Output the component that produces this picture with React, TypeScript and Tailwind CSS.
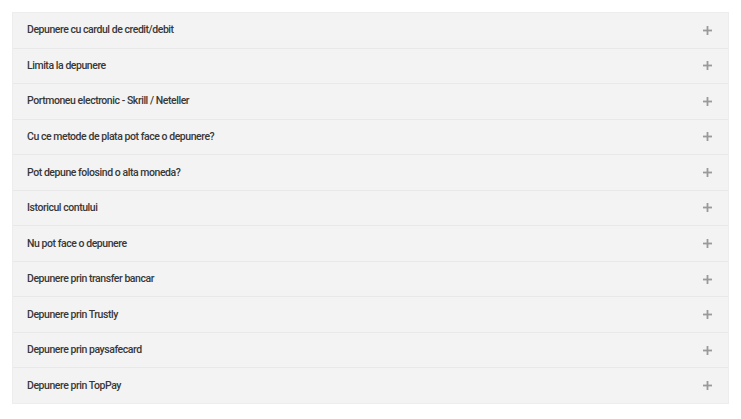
import React from 'react';

const items = [
  'Depunere cu cardul de credit/debit',
  'Limita la depunere',
  'Portmoneu electronic - Skrill / Neteller',
  'Cu ce metode de plata pot face o depunere?',
  'Pot depune folosind o alta moneda?',
  'Istoricul contului',
  'Nu pot face o depunere',
  'Depunere prin transfer bancar',
  'Depunere prin Trustly',
  'Depunere prin paysafecard',
  'Depunere prin TopPay',
];

export default function App() {
  return (
    <div className="w-[741px] h-[419px] bg-white pt-[12px] px-[12px]" style={{ fontFamily: 'Roboto, "Liberation Sans", sans-serif' }}>
      <div className="w-[717px] flex flex-col border border-[#ededed]">
        {items.map((label, i) => (
          <div
            key={label}
            className={`flex items-center justify-between bg-[#f3f3f3] pl-[14px] pr-[16px] ${i === 0 ? 'h-[34.5px]' : 'h-[35.55px] border-t border-[#e8e8e8]'}`}
          >
            <span className="text-[10.5px] font-medium tracking-[-0.45px] text-[#383838]">{label}</span>
            <svg width="9" height="9" viewBox="0 0 9 9" className="text-[#9a9a9a]">
              <rect x="3.6" y="0" width="1.8" height="9" fill="currentColor" />
              <rect x="0" y="3.6" width="9" height="1.8" fill="currentColor" />
            </svg>
          </div>
        ))}
      </div>
    </div>
  );
}
